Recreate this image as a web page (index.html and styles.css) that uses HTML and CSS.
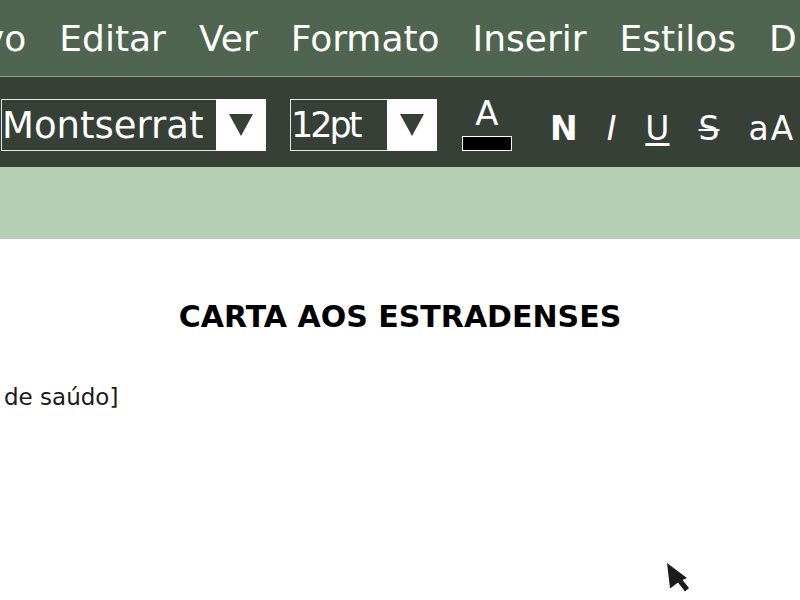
FILE: index.html
```html
<!DOCTYPE html>
<html lang="gl">
<head>
<meta charset="utf-8">
<title>Carta aos estradenses</title>
<link rel="stylesheet" href="styles.css">
</head>
<body>
<div class="app">
  <nav class="menubar">
    <span class="menu-item menu-first">vo</span>
    <span class="menu-item">Editar</span>
    <span class="menu-item">Ver</span>
    <span class="menu-item">Formato</span>
    <span class="menu-item">Inserir</span>
    <span class="menu-item">Estilos</span>
    <span class="menu-item">D</span>
  </nav>
  <div class="toolbar">
    <div class="select select-font">
      <span class="select-value">Montserrat</span>
      <span class="select-arrow"><svg width="24" height="22" viewBox="0 0 24 22"><polygon points="0,0 24,0 12,22" fill="#374037"/></svg></span>
    </div>
    <div class="select select-size">
      <span class="select-value size-value">12pt</span>
      <span class="select-arrow"><svg width="24" height="22" viewBox="0 0 24 22"><polygon points="0,0 24,0 12,22" fill="#374037"/></svg></span>
    </div>
    <div class="color-btn">
      <span class="color-letter">A</span>
      <span class="color-bar"></span>
    </div>
    <div class="format-group">
      <span class="fmt fmt-bold">N</span>
      <span class="fmt fmt-italic">I</span>
      <span class="fmt fmt-under">U</span>
      <span class="fmt fmt-strike">S</span>
      <span class="fmt fmt-case">aA</span>
    </div>
  </div>
  <div class="ruler-band"></div>
  <main class="page">
    <h1 class="doc-title">CARTA AOS ESTRADENSES</h1>
    <p class="doc-greeting">de saúdo]</p>
  </main>
  <svg class="cursor" width="24" height="30" viewBox="0 0 24 30"><polygon points="0,0 20,15 15.5,17 22,25 18,28.5 11,19.5 3,25.5" fill="#1c1c1c"/></svg>
</div>
</body>
</html>
```
FILE: styles.css
```css
html, body {
  margin: 0;
  padding: 0;
  background: #ffffff;
  overflow: hidden;
}
body {
  font-family: "DejaVu Sans", "Liberation Sans", sans-serif;
  width: 800px;
  height: 600px;
}
.app {
  position: relative;
  width: 800px;
  height: 600px;
  overflow: hidden;
}
.menubar {
  display: flex;
  align-items: center;
  gap: 33px;
  height: 76px;
  background: #4f654f;
  border-bottom: 1px solid #8aa38a;
  color: #ffffff;
  font-size: 36px;
  white-space: nowrap;
}
.menu-first {
  margin-left: -17px;
}
.toolbar {
  display: flex;
  align-items: flex-start;
  box-sizing: border-box;
  height: 90px;
  padding: 22px 0 0 1px;
  background: #374037;
  color: #ffffff;
  white-space: nowrap;
}
.select {
  display: flex;
  height: 52px;
}
.select-value {
  box-sizing: border-box;
  display: flex;
  align-items: center;
  height: 52px;
  border: 1px solid #e4e9e4;
  border-right: 0;
  font-size: 37px;
  overflow: hidden;
}
.select-font .select-value {
  width: 215px;
}
.select-size {
  margin-left: 24px;
}
.select-size .select-value {
  width: 97px;
}
.size-value {
  font-size: 35px;
  letter-spacing: -3px;
}
.select-arrow {
  display: flex;
  align-items: center;
  justify-content: center;
  width: 50px;
  height: 52px;
  background: #ffffff;
}
.color-btn {
  display: flex;
  flex-direction: column;
  align-items: center;
  width: 50px;
  margin-left: 25px;
}
.color-letter {
  font-size: 34px;
  line-height: 28px;
  height: 28px;
}
.color-bar {
  box-sizing: border-box;
  width: 50px;
  height: 15px;
  margin-top: 9px;
  background: #000000;
  border: 1px solid #ffffff;
}
.format-group {
  display: flex;
  align-items: baseline;
  gap: 29px;
  margin-left: 38px;
  margin-top: 10px;
  font-size: 33px;
}
.fmt-bold {
  font-weight: bold;
}
.fmt-italic {
  font-style: italic;
}
.fmt-under {
  text-decoration: underline;
  text-decoration-thickness: 3px;
  text-underline-offset: 3px;
}
.fmt-strike {
  text-decoration: line-through;
  text-decoration-thickness: 2px;
}
.fmt-case {
  letter-spacing: 2px;
}
.ruler-band {
  height: 72px;
  background: #b5cfb5;
}
.page {
  background: #ffffff;
  color: #000000;
}
.doc-title {
  margin: 60px 0 0;
  text-align: center;
  font-size: 30px;
  font-weight: bold;
  line-height: normal;
}
.doc-greeting {
  margin: 50px 0 0;
  padding-left: 4px;
  font-size: 23px;
  color: #1a1a1a;
}
.cursor {
  position: absolute;
  left: 667px;
  top: 563px;
}
```
